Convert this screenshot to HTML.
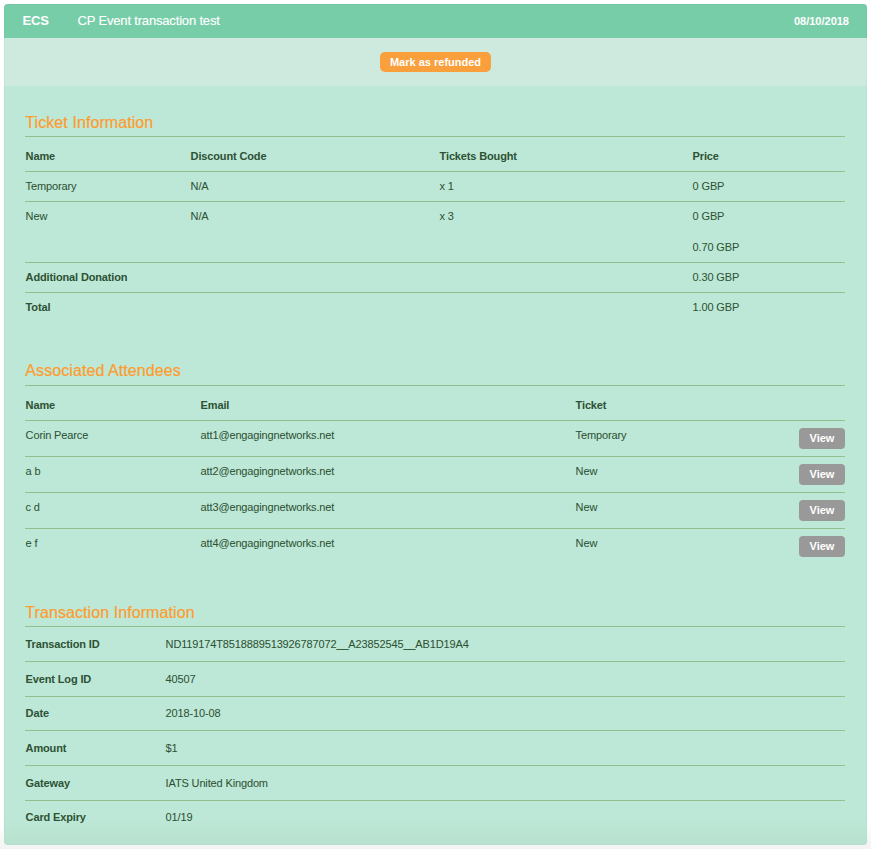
<!DOCTYPE html>
<html><head><meta charset="utf-8"><style>
:root{--header:#78cda9;--sub:#cee9dd;--body:#bde7d6;--line:#95bf8f;--title:#fd9c2e;--text:#2d5234;--orange:#f9a03c;--view:#999999;}
html,body{margin:0;padding:0;background:linear-gradient(#fff 0,#fff 822px,#f3f3f3 849px);width:871px;height:849px;overflow:hidden;}
body{font-family:"Liberation Sans",sans-serif;}
.card{position:absolute;left:4px;top:4px;width:863px;height:841px;border-radius:4px;background:linear-gradient(var(--body) 0,var(--body) 815px,#b8e1cf 841px);overflow:hidden;}
.hdr{position:absolute;left:0;top:0;width:863px;height:34px;background:var(--header);}
.sub{position:absolute;left:0;top:34px;width:863px;height:48px;background:var(--sub);}
.edge{position:absolute;left:0;top:0;right:0;bottom:0;border-radius:4px;box-shadow:inset 0 0 0 1px rgba(0,110,60,.035);}
.wrap{position:absolute;left:0;top:0;width:871px;height:849px;}
.t{position:absolute;white-space:nowrap;line-height:20px;color:var(--text);}
.l{position:absolute;left:25px;width:820px;height:1px;background:var(--line);}
.btn{position:absolute;color:#fff;font-weight:bold;font-size:11px;text-align:center;}
</style></head><body>
<div class="card"><div class="hdr"></div><div class="sub"></div><div class="edge"></div></div>
<div class="wrap">
<div class="t" style="left:22.5px;top:11px;font-size:13px;letter-spacing:-0.17px;font-weight:bold;color:#fff;">ECS</div>
<div class="t" style="left:77.5px;top:11px;font-size:13px;letter-spacing:-0.17px;color:#fff;-webkit-text-stroke:0.12px currentColor;">CP Event transaction test</div>
<div class="t" style="right:22px;top:11px;font-size:11px;font-weight:bold;color:#fff">08/10/2018</div>
<div class="btn" style="left:380px;top:52px;width:111px;height:20px;line-height:20px;background:var(--orange);border-radius:5px;">Mark as refunded</div>
<div class="t" style="left:25.3px;top:113px;font-size:16px;letter-spacing:0.08px;color:var(--title);-webkit-text-stroke:0.2px currentColor;">Ticket Information</div>
<div class="l" style="top:136px"></div>
<div class="l" style="top:171px"></div>
<div class="l" style="top:201px"></div>
<div class="l" style="top:262px"></div>
<div class="l" style="top:292px"></div>
<div class="t" style="left:25.6px;top:146px;font-size:11px;letter-spacing:-0.14px;font-weight:bold;">Name</div>
<div class="t" style="left:190.6px;top:146px;font-size:11px;letter-spacing:-0.14px;font-weight:bold;">Discount Code</div>
<div class="t" style="left:439.6px;top:146px;font-size:11px;letter-spacing:-0.14px;font-weight:bold;">Tickets Bought</div>
<div class="t" style="left:692.6px;top:146px;font-size:11px;letter-spacing:-0.14px;font-weight:bold;">Price</div>
<div class="t" style="left:25.6px;top:176px;font-size:11px;letter-spacing:-0.14px;-webkit-text-stroke:0.04px currentColor;">Temporary</div>
<div class="t" style="left:190.6px;top:176px;font-size:11px;letter-spacing:-0.14px;-webkit-text-stroke:0.04px currentColor;">N/A</div>
<div class="t" style="left:439.6px;top:176px;font-size:11px;letter-spacing:-0.14px;-webkit-text-stroke:0.04px currentColor;">x 1</div>
<div class="t" style="left:692.6px;top:176px;font-size:11px;letter-spacing:-0.14px;-webkit-text-stroke:0.04px currentColor;">0 GBP</div>
<div class="t" style="left:25.6px;top:206px;font-size:11px;letter-spacing:-0.14px;-webkit-text-stroke:0.04px currentColor;">New</div>
<div class="t" style="left:190.6px;top:206px;font-size:11px;letter-spacing:-0.14px;-webkit-text-stroke:0.04px currentColor;">N/A</div>
<div class="t" style="left:439.6px;top:206px;font-size:11px;letter-spacing:-0.14px;-webkit-text-stroke:0.04px currentColor;">x 3</div>
<div class="t" style="left:692.6px;top:206px;font-size:11px;letter-spacing:-0.14px;-webkit-text-stroke:0.04px currentColor;">0 GBP</div>
<div class="t" style="left:692.6px;top:237px;font-size:11px;letter-spacing:-0.14px;-webkit-text-stroke:0.04px currentColor;">0.70 GBP</div>
<div class="t" style="left:25.6px;top:267px;font-size:11px;letter-spacing:-0.14px;font-weight:bold;">Additional Donation</div>
<div class="t" style="left:692.6px;top:267px;font-size:11px;letter-spacing:-0.14px;-webkit-text-stroke:0.04px currentColor;">0.30 GBP</div>
<div class="t" style="left:25.6px;top:297px;font-size:11px;letter-spacing:-0.14px;font-weight:bold;">Total</div>
<div class="t" style="left:692.6px;top:297px;font-size:11px;letter-spacing:-0.14px;-webkit-text-stroke:0.04px currentColor;">1.00 GBP</div>
<div class="t" style="left:25.3px;top:361px;font-size:16px;letter-spacing:0.08px;color:var(--title);-webkit-text-stroke:0.2px currentColor;">Associated Attendees</div>
<div class="l" style="top:385px"></div>
<div class="l" style="top:420px"></div>
<div class="l" style="top:456px"></div>
<div class="l" style="top:492px"></div>
<div class="l" style="top:528px"></div>
<div class="t" style="left:25.6px;top:395px;font-size:11px;letter-spacing:-0.14px;font-weight:bold;">Name</div>
<div class="t" style="left:200.6px;top:395px;font-size:11px;letter-spacing:-0.14px;font-weight:bold;">Email</div>
<div class="t" style="left:575.6px;top:395px;font-size:11px;letter-spacing:-0.14px;font-weight:bold;">Ticket</div>
<div class="t" style="left:25.6px;top:425px;font-size:11px;letter-spacing:-0.14px;-webkit-text-stroke:0.04px currentColor;">Corin Pearce</div>
<div class="t" style="left:200.6px;top:425px;font-size:11px;letter-spacing:-0.14px;-webkit-text-stroke:0.04px currentColor;">att1@engagingnetworks.net</div>
<div class="t" style="left:575.6px;top:425px;font-size:11px;letter-spacing:-0.14px;-webkit-text-stroke:0.04px currentColor;">Temporary</div>
<div class="btn" style="left:799px;top:428px;width:46px;height:21px;line-height:21px;background:var(--view);border-radius:4px;">View</div>
<div class="t" style="left:25.6px;top:461px;font-size:11px;letter-spacing:-0.14px;-webkit-text-stroke:0.04px currentColor;">a b</div>
<div class="t" style="left:200.6px;top:461px;font-size:11px;letter-spacing:-0.14px;-webkit-text-stroke:0.04px currentColor;">att2@engagingnetworks.net</div>
<div class="t" style="left:575.6px;top:461px;font-size:11px;letter-spacing:-0.14px;-webkit-text-stroke:0.04px currentColor;">New</div>
<div class="btn" style="left:799px;top:464px;width:46px;height:21px;line-height:21px;background:var(--view);border-radius:4px;">View</div>
<div class="t" style="left:25.6px;top:497px;font-size:11px;letter-spacing:-0.14px;-webkit-text-stroke:0.04px currentColor;">c d</div>
<div class="t" style="left:200.6px;top:497px;font-size:11px;letter-spacing:-0.14px;-webkit-text-stroke:0.04px currentColor;">att3@engagingnetworks.net</div>
<div class="t" style="left:575.6px;top:497px;font-size:11px;letter-spacing:-0.14px;-webkit-text-stroke:0.04px currentColor;">New</div>
<div class="btn" style="left:799px;top:500px;width:46px;height:21px;line-height:21px;background:var(--view);border-radius:4px;">View</div>
<div class="t" style="left:25.6px;top:533px;font-size:11px;letter-spacing:-0.14px;-webkit-text-stroke:0.04px currentColor;">e f</div>
<div class="t" style="left:200.6px;top:533px;font-size:11px;letter-spacing:-0.14px;-webkit-text-stroke:0.04px currentColor;">att4@engagingnetworks.net</div>
<div class="t" style="left:575.6px;top:533px;font-size:11px;letter-spacing:-0.14px;-webkit-text-stroke:0.04px currentColor;">New</div>
<div class="btn" style="left:799px;top:536px;width:46px;height:21px;line-height:21px;background:var(--view);border-radius:4px;">View</div>
<div class="t" style="left:25.3px;top:603px;font-size:16px;letter-spacing:0.08px;color:var(--title);-webkit-text-stroke:0.2px currentColor;">Transaction Information</div>
<div class="l" style="top:626px"></div>
<div class="l" style="top:661px"></div>
<div class="l" style="top:696px"></div>
<div class="l" style="top:730px"></div>
<div class="l" style="top:765px"></div>
<div class="l" style="top:800px"></div>
<div class="t" style="left:25.6px;top:634px;font-size:11px;letter-spacing:-0.14px;font-weight:bold;">Transaction ID</div>
<div class="t" style="left:165.6px;top:634px;font-size:11px;letter-spacing:-0.14px;-webkit-text-stroke:0.04px currentColor;">ND119174T8518889513926787072__A23852545__AB1D19A4</div>
<div class="t" style="left:25.6px;top:669px;font-size:11px;letter-spacing:-0.14px;font-weight:bold;">Event Log ID</div>
<div class="t" style="left:165.6px;top:669px;font-size:11px;letter-spacing:-0.14px;-webkit-text-stroke:0.04px currentColor;">40507</div>
<div class="t" style="left:25.6px;top:703px;font-size:11px;letter-spacing:-0.14px;font-weight:bold;">Date</div>
<div class="t" style="left:165.6px;top:703px;font-size:11px;letter-spacing:-0.14px;-webkit-text-stroke:0.04px currentColor;">2018-10-08</div>
<div class="t" style="left:25.6px;top:738px;font-size:11px;letter-spacing:-0.14px;font-weight:bold;">Amount</div>
<div class="t" style="left:165.6px;top:738px;font-size:11px;letter-spacing:-0.14px;-webkit-text-stroke:0.04px currentColor;">$1</div>
<div class="t" style="left:25.6px;top:773px;font-size:11px;letter-spacing:-0.14px;font-weight:bold;">Gateway</div>
<div class="t" style="left:165.6px;top:773px;font-size:11px;letter-spacing:-0.14px;-webkit-text-stroke:0.04px currentColor;">IATS United Kingdom</div>
<div class="t" style="left:25.6px;top:807px;font-size:11px;letter-spacing:-0.14px;font-weight:bold;">Card Expiry</div>
<div class="t" style="left:165.6px;top:807px;font-size:11px;letter-spacing:-0.14px;-webkit-text-stroke:0.04px currentColor;">01/19</div>
</div>
</body></html>
